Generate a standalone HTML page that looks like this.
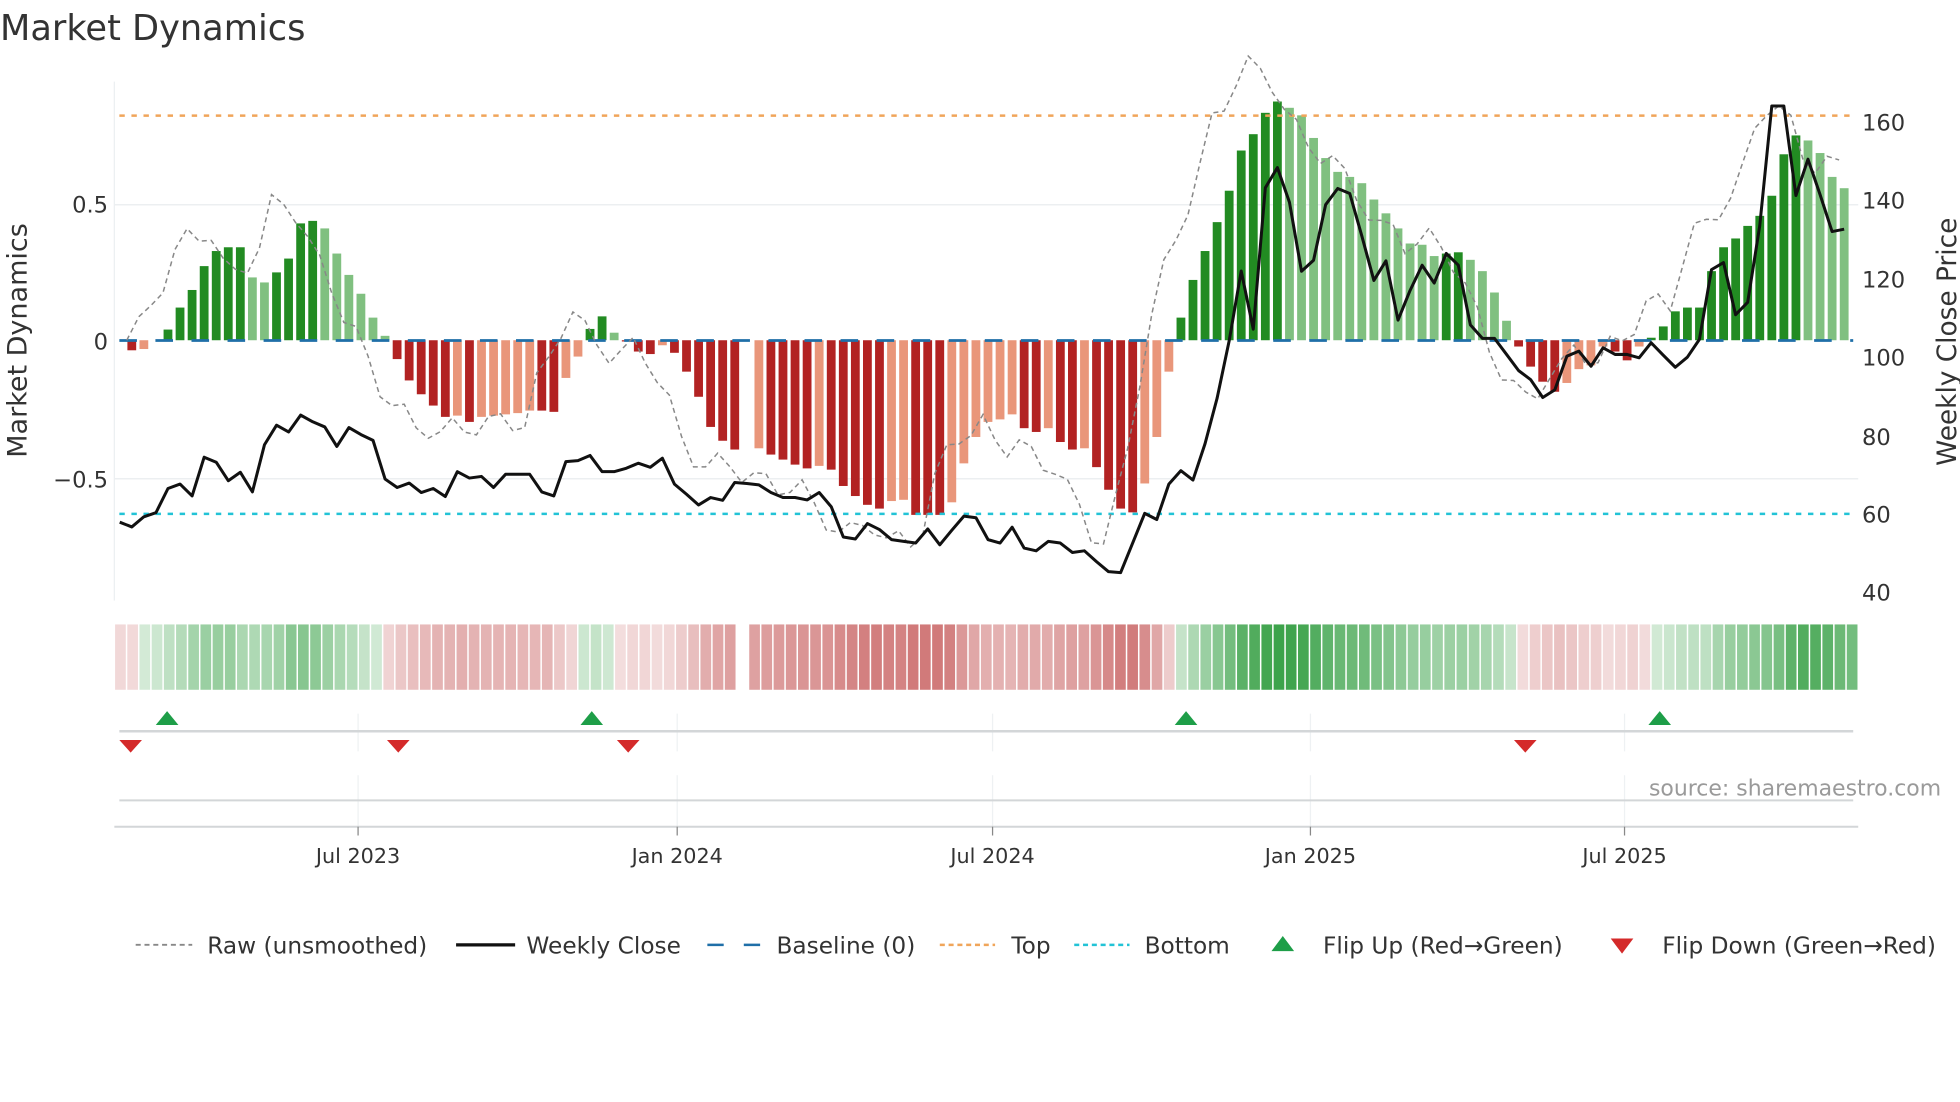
<!DOCTYPE html>
<html><head><meta charset="utf-8">
<style>
html,body{margin:0;padding:0;background:#fff;}
svg{display:block;font-family:"DejaVu Sans","Liberation Sans",sans-serif;}
</style></head>
<body>
<svg id="s" width="1960" height="1102" viewBox="0 0 1560 877.1" xmlns="http://www.w3.org/2000/svg">
<rect width="1560" height="877.1" fill="#fff"/>
<text x="0" y="32" font-size="28" fill="#333">Market Dynamics</text>

<line x1="91" y1="65" x2="91" y2="478" stroke="#eceff1" stroke-width="1"/>
<line x1="91" y1="163" x2="1479" y2="163" stroke="#eceff1" stroke-width="1.2"/>
<line x1="91" y1="381" x2="1479" y2="381" stroke="#eceff1" stroke-width="1.2"/>
<g id="bars"></g>
<line x1="95" y1="92" x2="1475" y2="92" stroke="#f0a55a" stroke-width="2" stroke-dasharray="4.3 5.3"/>
<line x1="95" y1="409" x2="1475" y2="409" stroke="#22c3d6" stroke-width="2" stroke-dasharray="4.3 5.3"/>
<line x1="95" y1="271" x2="1475" y2="271" stroke="#1f6fa8" stroke-width="2.2" stroke-dasharray="14 14.7"/>
<path id="raw" fill="none" stroke="#888" stroke-width="1.2" stroke-dasharray="4 3"/>
<path id="price" fill="none" stroke="#111" stroke-width="2.4" stroke-linejoin="round"/>

<g font-size="18" fill="#333">
<text x="86" y="169" text-anchor="end">0.5</text>
<text x="86" y="278" text-anchor="end">0</text>
<text x="86" y="388" text-anchor="end">−0.5</text>
<text x="1482" y="104">160</text>
<text x="1482" y="166">140</text>
<text x="1482" y="229">120</text>
<text x="1482" y="291">100</text>
<text x="1482" y="354">80</text>
<text x="1482" y="416">60</text>
<text x="1482" y="478">40</text>
</g>
<text transform="translate(21,271) rotate(-90)" text-anchor="middle" font-size="21.5" fill="#333">Market Dynamics</text>
<text transform="translate(1557,272) rotate(-90)" text-anchor="middle" font-size="21" fill="#333">Weekly Close Price</text>

<g id="heat"></g>

<g stroke="#eef1f3" stroke-width="1">
<line x1="285" y1="568" x2="285" y2="598"/><line x1="539" y1="568" x2="539" y2="598"/>
<line x1="790" y1="568" x2="790" y2="598"/><line x1="1043" y1="568" x2="1043" y2="598"/>
<line x1="1293" y1="568" x2="1293" y2="598"/>
<line x1="285" y1="617" x2="285" y2="658"/><line x1="539" y1="617" x2="539" y2="658"/>
<line x1="790" y1="617" x2="790" y2="658"/><line x1="1043" y1="617" x2="1043" y2="658"/>
<line x1="1293" y1="617" x2="1293" y2="658"/>
</g>
<line x1="95" y1="582" x2="1475" y2="582" stroke="#d3d6d8" stroke-width="2"/>
<g fill="#1e9e48">
<polygon points="124,577 142,577 133,566"/>
<polygon points="462,577 480,577 471,566"/>
<polygon points="935,577 953,577 944,566"/>
<polygon points="1312,577 1330,577 1321,566"/>
</g>
<g fill="#d42a2a">
<polygon points="95,589 113,589 104,599"/>
<polygon points="308,589 326,589 317,599"/>
<polygon points="491,589 509,589 500,599"/>
<polygon points="1205,589 1223,589 1214,599"/>
</g>
<text x="1545" y="633" text-anchor="end" font-size="17.5" fill="#9a9a9a">source: sharemaestro.com</text>
<line x1="95" y1="637" x2="1475" y2="637" stroke="#d3d6d8" stroke-width="1.6"/>
<line x1="91" y1="658" x2="1479" y2="658" stroke="#d3d6d8" stroke-width="1.6"/>
<g stroke="#888" stroke-width="1">
<line x1="285" y1="658" x2="285" y2="665"/><line x1="539" y1="658" x2="539" y2="665"/>
<line x1="790" y1="658" x2="790" y2="665"/><line x1="1043" y1="658" x2="1043" y2="665"/>
<line x1="1293" y1="658" x2="1293" y2="665"/>
</g>
<g font-size="16.5" fill="#333" text-anchor="middle">
<text x="285" y="687">Jul 2023</text>
<text x="539" y="687">Jan 2024</text>
<text x="790" y="687">Jul 2024</text>
<text x="1043" y="687">Jan 2025</text>
<text x="1293" y="687">Jul 2025</text>
</g>

<g font-size="18.5" fill="#333">
<line x1="108" y1="752" x2="153" y2="752" stroke="#888" stroke-width="1.5" stroke-dasharray="4 3"/>
<text x="165" y="759">Raw (unsmoothed)</text>
<line x1="363" y1="752" x2="410" y2="752" stroke="#111" stroke-width="2.6"/>
<text x="419" y="759">Weekly Close</text>
<line x1="563" y1="752" x2="607" y2="752" stroke="#1f6fa8" stroke-width="2" stroke-dasharray="13 16"/>
<text x="618" y="759">Baseline (0)</text>
<line x1="748" y1="752" x2="792" y2="752" stroke="#f0a55a" stroke-width="2" stroke-dasharray="4 3"/>
<text x="805" y="759">Top</text>
<line x1="855" y1="752" x2="899" y2="752" stroke="#22c3d6" stroke-width="2" stroke-dasharray="4 3"/>
<text x="911" y="759">Bottom</text>
<polygon points="1012,757 1030,757 1021,745" fill="#1e9e48"/>
<text x="1053" y="759">Flip Up (Red→Green)</text>
<polygon points="1282,747 1300,747 1291,759" fill="#d42a2a"/>
<text x="1323" y="759">Flip Down (Green→Red)</text>
</g>
</svg>
<script>
(function(){
var NS="http://www.w3.org/2000/svg";
var V=[-8,-7,0,8.5,26,40,59,71,74,74,50,46,54,65,93,95,89,69,52,37,18,3.5,
-15,-32,-43,-52,-61,-60,-65,-61,-60,-59,-58,-56,-56,-57,
-30,-13,9,19,6,-1,-9,-11,-4,-10,-25,-45,-69,-80,-87,null,
-86,-91,-95,-99,-102,-100,-103,-116,-124,-131,-134,-128,-127,-139,-139,-139,-129,-98,-77,-65,
-63,-59,-70,-73,-70,-81,-87,-86,-101,-119,-134,-137,-114,-77,-25,18,48,71,94,119,151,164,181,190,185,179,161,145,134,130,125,112,101,89,77,76,67,
69,70,64,55,38,15.5,-5,-21,-33,-41,-34,-23,-20,-5,-9,-16,-5,2,11,23,26,26,55,74,81,91,99,115,148,163,159,149,130,121];
var P=[1328,1342,1312,1300,1228,1215,1250,1135,1150,1205,1180,1238,1098,1040,1060,1010,1030,1045,1103,1047,1068,1085,1200,1225,1212,1240,1228,1252,1178,1197,1192,1225,1186,1186,1186,1238,
1250,1148,1145,1130,1178,1178,1168,1153,1165,1138,1215,1245,1277,1255,1263,1210,1213,1217,1240,1255,1255,1262,1240,1282,1372,1378,1332,1350,1380,1385,1390,1348,1395,1352,1310,1315,1380,
1390,1343,1405,1413,1385,1390,1418,1413,1445,1475,1478,1390,1302,1320,1215,1175,1203,1095,960,790,582,755,335,275,378,583,550,385,337,352,478,610,552,728,640,565,
618,530,565,742,782,782,830,878,905,958,935,835,820,865,810,830,830,840,795,832,868,838,785,578,557,712,675,448,92,92,358,250,355,465,458];
var Z=270.8, PITCH=9.598, X0=104.9;
var HW=(1479-91)/V.length;
var bars=document.getElementById("bars"), heat=document.getElementById("heat");
var prev=0;
for(var i=0;i<V.length;i++){
  var v=V[i]; var x=X0+PITCH*i;
  if(v===null){prev=0;continue;}
  var r=document.createElementNS(NS,"rect");
  var col;
  if(v>=0){col=(v>=prev)?"#228b22":"#80c080";}
  else{col=(v<=prev)?"#b22222":"#e9967a";}
  if(i===52) col="#e9967a";
  r.setAttribute("x",(x-3.5).toFixed(2));
  r.setAttribute("width","7");
  if(v>=0){r.setAttribute("y",(Z-v).toFixed(2));r.setAttribute("height",v.toFixed(2));}
  else{r.setAttribute("y",Z.toFixed(2));r.setAttribute("height",(-v).toFixed(2));}
  r.setAttribute("fill",col);
  bars.appendChild(r);
  prev=v;
  var h=document.createElementNS(NS,"rect");
  h.setAttribute("x",(91+HW*i+0.6).toFixed(2));
  h.setAttribute("width",(HW-1.2).toFixed(2));
  h.setAttribute("y","497");h.setAttribute("height","52");
  var a;
  if(v>=0){a=0.2+0.68*Math.min(v/190,1);h.setAttribute("fill","rgba(34,150,50,"+a.toFixed(3)+")");}
  else{a=0.15+0.45*Math.min(-v/139,1);h.setAttribute("fill","rgba(178,34,34,"+a.toFixed(3)+")");}
  heat.appendChild(h);
}
var d="";
for(var j=0;j<P.length;j++){
  var px=95.3+PITCH*j, py=59.7+P[j]*0.268;
  d+=(j?"L":"M")+px.toFixed(1)+" "+py.toFixed(1);
}
document.getElementById("price").setAttribute("d",d);
var rd="";
for(var k=0;k<V.length;k++){
  var idx=Math.min(k+2,V.length-1); var vv=V[idx]; if(vv===null) vv=V[idx+1];
  var rv=vv*1.15+Math.sin(k*1.7)*9;
  var rx=X0+PITCH*k-4, ry=Z-rv;
  rd+=(k?"L":"M")+rx.toFixed(1)+" "+ry.toFixed(1);
}
document.getElementById("raw").setAttribute("d",rd);
})();
</script>
</body></html>
